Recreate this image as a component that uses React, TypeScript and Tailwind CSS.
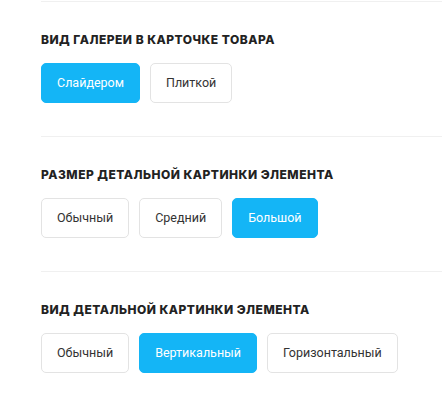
import { useState } from "react";

type Group = {
  title: string;
  options: string[];
  initial: string;
};

const groups: Group[] = [
  {
    title: "Вид галереи в карточке товара",
    options: ["Слайдером", "Плиткой"],
    initial: "Слайдером",
  },
  {
    title: "Размер детальной картинки элемента",
    options: ["Обычный", "Средний", "Большой"],
    initial: "Большой",
  },
  {
    title: "Вид детальной картинки элемента",
    options: ["Обычный", "Вертикальный", "Горизонтальный"],
    initial: "Вертикальный",
  },
];

function OptionGroup({ group }: { group: Group }) {
  const [value, setValue] = useState(group.initial);

  return (
    <section className="border-t border-[#f0f0f0] pt-[31px] pb-[33px]">
      <h3 className="text-[12px] leading-[14px] font-extrabold uppercase tracking-[0.04em] text-[#222222]">
        {group.title}
      </h3>
      <div className="mt-[16px] flex gap-[10px]">
        {group.options.map((option) => (
          <button
            key={option}
            onClick={() => setValue(option)}
            className={`h-[40px] rounded-[5px] px-[15px] text-[12.5px] ${
              option === value
                ? "border border-[#14b5f6] bg-[#14b5f6] text-white"
                : "border border-[#e3e3e3] bg-white text-[#333333] hover:border-[#cfcfcf]"
            }`}
            style={{ fontFamily: "Roboto, 'Liberation Sans', sans-serif" }}
          >
            {option}
          </button>
        ))}
      </div>
    </section>
  );
}

export default function App() {
  return (
    <div
      className="min-h-screen bg-white pt-px pl-[41px]"
      style={{ fontFamily: "Inter, 'Noto Sans', sans-serif" }}
    >
      {groups.map((group) => (
        <OptionGroup key={group.title} group={group} />
      ))}
    </div>
  );
}
